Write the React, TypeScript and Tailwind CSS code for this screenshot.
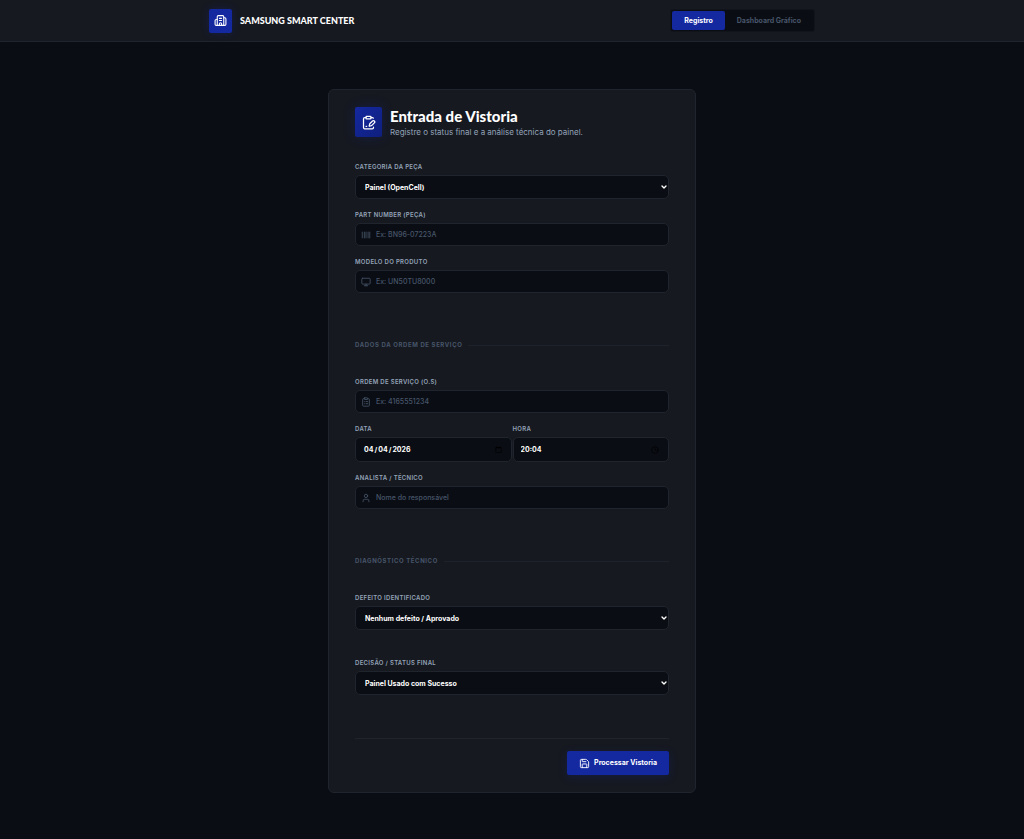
import { useState } from "react";
import type { ReactNode } from "react";
import {
    Barcode,
    Building2,
    ChevronDown,
    ClipboardList,
    ClipboardPenLine,
    Clock,
    Monitor,
    Save,
    User,
} from "lucide-react";
import type { LucideIcon } from "lucide-react";

const CONTROL =
    "w-full rounded-[5px] border border-[#20242c] bg-[#0a0d14] text-[7px] leading-[12px] text-white outline-none focus:border-[#1428a0]";

interface FieldProps {
    id: string;
    label: string;
    children: ReactNode;
}

function Field({ id, label, children }: FieldProps) {
    return (
        <div className="flex flex-1 flex-col gap-1">
            <label
                htmlFor={id}
                className="text-[6px] leading-[8px] font-semibold tracking-wider text-[#94a3b8] uppercase"
            >
                {label}
            </label>
            {children}
        </div>
    );
}

interface TextFieldProps {
    id: string;
    label: string;
    placeholder: string;
    icon: LucideIcon;
}

function TextField({ id, label, placeholder, icon: Icon }: TextFieldProps) {
    return (
        <Field id={id} label={label}>
            <div className={`${CONTROL} flex h-[23px] items-center gap-[5px] px-[5px]`}>
                <Icon size={10} className="shrink-0 text-[#475569]" />
                <input
                    id={id}
                    type="text"
                    placeholder={placeholder}
                    className="min-w-0 flex-1 bg-transparent pt-px font-medium outline-none placeholder:text-[#475569]"
                />
            </div>
        </Field>
    );
}

interface SelectFieldProps {
    id: string;
    label: string;
    options: string[];
}

function SelectField({ id, label, options }: SelectFieldProps) {
    return (
        <Field id={id} label={label}>
            <div className="relative">
                <select id={id} className={`${CONTROL} block h-6 appearance-none px-[9px] pt-px font-bold`}>
                    {options.map((option) => (
                        <option key={option}>{option}</option>
                    ))}
                </select>
                <ChevronDown
                    size={8}
                    strokeWidth={4}
                    className="pointer-events-none absolute inset-y-0 right-px my-auto"
                />
            </div>
        </Field>
    );
}

function SectionTitle({ children }: { children: ReactNode }) {
    return (
        <div className="mt-[47px] mb-7 flex items-center gap-1.5">
            <h2 className="text-[6px] leading-[10px] font-bold tracking-widest text-[#475569] uppercase">
                {children}
            </h2>
            <div className="h-px flex-1 bg-[#1e222a]" />
        </div>
    );
}

export default function App() {
    const [tab, setTab] = useState("registro");

    const tabClass = (name: string) =>
        tab === name
            ? "rounded-[2px] bg-[#1428a0] px-3 pt-px text-white"
            : "rounded-[2px] px-3 pt-px text-[#475569]";

    return (
        <div className="min-h-screen bg-[#0a0d14] font-['Inter',sans-serif] text-white">
            <header className="border-b border-[#20242c] bg-[#161920]">
                <div className="mx-auto flex h-[41px] max-w-[606px] items-center justify-between">
                    <div className="flex items-center gap-2">
                        <div className="flex h-6 w-[23px] items-center justify-center rounded-[2px] bg-[#1428a0] shadow-[0_0_8px_rgba(20,40,160,0.3)]">
                            <Building2 size={13} />
                        </div>
                        <span className="font-['Lato',sans-serif] text-[9px] font-black">
                            SAMSUNG SMART CENTER
                        </span>
                    </div>
                    <nav className="flex h-[23px] rounded-[3px] border border-[#11141a] bg-[#0a0d14] p-px text-[7px] leading-[12px] font-bold">
                        <button className={tabClass("registro")} onClick={() => setTab("registro")}>
                            Registro
                        </button>
                        <button className={tabClass("dashboard")} onClick={() => setTab("dashboard")}>
                            Dashboard Gráfico
                        </button>
                    </nav>
                </div>
            </header>

            <main className="px-4 pt-[47px] pb-[46px]">
                <form
                    onSubmit={(e) => e.preventDefault()}
                    className="mx-auto max-w-[368px] rounded-md border border-[#20242c] bg-[#161920] px-[26px] pt-4 pb-[17px]"
                >
                    {/* Cabeçalho */}
                    <div className="flex items-center gap-2">
                        <div className="flex h-[30px] w-[27px] items-center justify-center rounded-[2px] bg-linear-to-br from-[#1428a0] to-[#0f1f7d] shadow-[0_0_12px_rgba(20,40,160,0.3)]">
                            <ClipboardPenLine size={15} />
                        </div>
                        <div>
                            <h1 className="font-['Lato',sans-serif] text-[15px] leading-5 font-black">
                                Entrada de Vistoria
                            </h1>
                            <p className="text-[8px] leading-[12px] text-[#94a3b8]">
                                Registre o status final e a análise técnica do painel.
                            </p>
                        </div>
                    </div>

                    <div className="mt-[25px] flex flex-col gap-3">
                        <SelectField id="categoria" label="Categoria da Peça" options={["Painel (OpenCell)"]} />
                        <TextField id="part-number" label="Part Number (Peça)" placeholder="Ex: BN96-07223A" icon={Barcode} />
                        <TextField id="modelo" label="Modelo do Produto" placeholder="Ex: UN50TU8000" icon={Monitor} />
                    </div>

                    {/* Ordem de serviço */}
                    <SectionTitle>Dados da Ordem de Serviço</SectionTitle>
                    <div className="flex flex-col gap-3">
                        <TextField id="ordem" label="Ordem de Serviço (O.S)" placeholder="Ex: 4165551234" icon={ClipboardList} />
                        <div className="flex gap-px">
                            <Field id="data" label="Data">
                                <input
                                    id="data"
                                    type="date"
                                    defaultValue="2026-04-04"
                                    className={`${CONTROL} h-[25px] px-[7px] font-bold`}
                                />
                            </Field>
                            <Field id="hora" label="Hora">
                                <div className={`${CONTROL} flex h-[25px] items-center px-[7px]`}>
                                    <input
                                        id="hora"
                                        type="text"
                                        inputMode="numeric"
                                        defaultValue="20:04"
                                        className="min-w-0 flex-1 bg-transparent pt-px font-bold outline-none"
                                    />
                                    <Clock size={8} className="mr-0.5 shrink-0 text-black" />
                                </div>
                            </Field>
                        </div>
                        <TextField id="analista" label="Analista / Técnico" placeholder="Nome do responsável" icon={User} />
                    </div>

                    {/* Diagnóstico */}
                    <SectionTitle>Diagnóstico Técnico</SectionTitle>
                    <div className="flex flex-col gap-[29px]">
                        <SelectField id="defeito" label="Defeito Identificado" options={["Nenhum defeito / Aprovado"]} />
                        <SelectField id="decisao" label="Decisão / Status Final" options={["Painel Usado com Sucesso"]} />
                    </div>

                    <div className="mt-[43px] flex justify-end border-t border-[#20242c] pt-3">
                        <button
                            type="submit"
                            className="flex h-6 items-center gap-1 rounded-[2px] bg-[#1428a0] px-3 text-[7px] leading-[12px] font-bold shadow-[0_2px_8px_rgba(20,40,160,0.25)]"
                        >
                            <Save size={11} />
                            Processar Vistoria
                        </button>
                    </div>
                </form>
            </main>
        </div>
    );
}
